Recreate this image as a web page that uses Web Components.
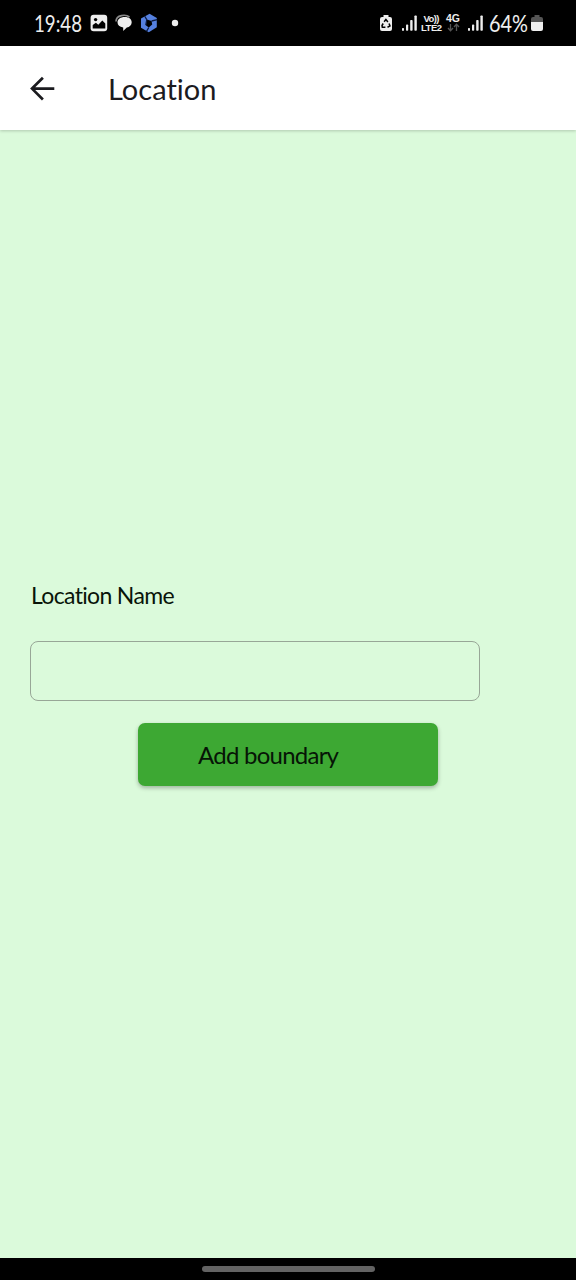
<!DOCTYPE html>
<html lang="en">
<head>
<meta charset="utf-8">
<title>Location</title>
<style>
html,body{margin:0;height:100%}
body{font-family:Lato,"Open Sans",sans-serif;background:#000;overflow:hidden}
</style>
</head>
<body>
<location-screen></location-screen>
<script>
const define = (name, html, setup) => customElements.define(name, class extends HTMLElement {
  constructor() {
    super();
    this.attachShadow({mode: 'open'});
    const t = document.createElement('template');
    t.innerHTML = html;
    this.shadowRoot.append(t.content.cloneNode(true));
  }
  connectedCallback() { if (setup) setup.call(this); }
});

// Text fitted to the width attribute: spaced out evenly, or condensed when "squeeze" is set.
define('fit-text', `
<style>:host{display:block;white-space:nowrap;line-height:1.2}span{display:inline-block;transform-origin:0 50%}</style>
<span><slot></slot></span>`, function () {
  const span = this.shadowRoot.querySelector('span');
  const width = +this.getAttribute('width');
  this.style.width = width + 'px';
  this.style.fontSize = this.getAttribute('size') + 'px';
  const natural = span.getBoundingClientRect().width;
  if (this.hasAttribute('squeeze')) span.style.transform = `scaleX(${width / natural})`;
  else span.style.letterSpacing = (width - natural) / Math.max(1, this.textContent.length - 1) + 'px';
});

define('signal-bars', `
<style>:host{display:block;width:15px;height:16px}svg{display:block}</style>
<svg width="15" height="16" fill="#eee"><rect x="0" y="13" width="2" height="2.8" rx=".6"/><rect x="4" y="9.5" width="2.2" height="6.3" rx=".8"/><rect x="8.2" y="5" width="2.4" height="10.8" rx=".8"/><rect x="12.4" y=".5" width="2.4" height="15.3" rx=".8"/></svg>`);

define('status-bar', `
<style>
:host{display:flex;height:46px;box-sizing:border-box;padding:0 33px 0 34px;align-items:center;justify-content:space-between;background:#000;color:#eee}
div{display:flex;align-items:center}
svg{display:block;flex:none}
.net{display:grid;font:bold 9px/9px "Liberation Sans",Arial,sans-serif;justify-items:center}
.net fit-text{line-height:9px}
</style>
<div>
  <fit-text squeeze width="48" size="22.5">19:48</fit-text>
  <svg style="margin-left:8px" width="18" height="18" viewBox="0 0 18 18"><rect x=".6" y=".7" width="16.6" height="16.6" rx="3" fill="#eee"/><circle cx="5.6" cy="5.6" r="1.7" fill="#000"/><path d="M2.7 14.5V11l3.2-2.2 2.4 2 4-4.3 3 3.1v4.9z" fill="#000"/></svg>
  <svg style="margin-left:7px" width="18" height="18" viewBox="0 0 18 18"><path d="M1 7.5C1 .5 11 .3 14.5 3" fill="none" stroke="#8a8a8a" stroke-width="1.6"/><path d="M9.8 2.9c4.4 0 6.9 2.2 6.9 5.3 0 2.9-2.2 4.7-4.9 5.3L8.2 17v-3.6C4.6 13 2.5 11 2.5 8.2c0-3.1 2.8-5.3 7.3-5.3z" fill="#eee"/></svg>
  <svg style="margin-left:7px" width="18" height="20" viewBox="0 0 18 20"><path d="M9.6.8 16.8 5v9.2L8.8 19.3 1 14.8V5.4z" fill="#5580df"/><path d="M6.8 6.6 11.6 8l.6 3.5-3.4 3-3-2.3z" fill="#000"/><path d="M6.8 6.6 4.6 3M11.6 8l5.6-1.4M8.8 14.5 6.5 18.3M5.8 12.2 6.8 6.6" stroke="#0c1c42" stroke-width="1.3"/></svg>
  <svg style="margin-left:13px" width="8" height="8"><circle cx="4" cy="4" r="3.2" fill="#eee"/></svg>
</div>
<div>
  <svg width="12" height="18" viewBox="0 0 12 18"><path d="M3.5 1h5v2H10q2 0 2 2v10q0 2-2 2H2q-2 0-2-2V5q0-2 2-2h1.5z" fill="#eee"/><path d="m4.1 7.7 1.8-2.2 2 2.4M9 9.5l1 2.5-2.5 1.2M5.4 13.2H2.3L2 11.5l1.2-2" fill="none" stroke="#000" stroke-width="1.5"/></svg>
  <signal-bars style="margin-left:10px"></signal-bars>
  <div class="net" style="margin-left:4px"><fit-text width="16" size="9.5">Vo))</fit-text><fit-text width="21" size="9.5">LTE2</fit-text></div>
  <div class="net" style="margin-left:4px"><fit-text width="14" size="10.5">4G</fit-text><svg width="13" height="9" viewBox="0 0 13 9" fill="none" stroke="#555" stroke-width="1.3"><path d="M3.5 1v6.5M1 5l2.5 2.7L6 5M9.5 8V1.3M7 4l2.5-2.7L12 4"/></svg></div>
  <signal-bars style="margin-left:8px"></signal-bars>
  <fit-text squeeze style="margin-left:6px" width="39" size="22.5">64%</fit-text>
  <svg style="margin-left:3px" width="12" height="18" viewBox="0 0 12 18"><path d="M3.5 1h5v2H10q2 0 2 2v3H0V5q0-2 2-2h1.5z" fill="#555"/><path d="M0 8h12v7q0 2-2 2H2q-2 0-2-2z" fill="#eee"/></svg>
</div>`);

define('app-bar', `
<style>
:host{display:flex;height:84px;box-sizing:border-box;padding:2px 30px 0;align-items:center;background:#fff;color:#1b1b1f;box-shadow:0 1px 3px rgba(0,0,0,.2);z-index:1}
svg{display:block;margin-right:53px}
</style>
<svg width="25" height="26" viewBox="0 0 25 26" fill="none" stroke="#1b1b1f" stroke-width="2.7"><path d="M24.3 12.6H2.5M12.9 1.7 2 12.6l10.9 10.9"/></svg>
<slot></slot>`);

define('text-field', `
<style>
:host{display:block}
::slotted(*){margin-left:1px}
.box{height:60px;width:450px;box-sizing:border-box;border:1px solid #98a697;border-radius:8px;margin-top:31px}
</style>
<slot></slot><div class="box"></div>`);

define('primary-button', `
<style>
:host{display:flex;align-items:center;width:300px;height:63px;box-sizing:border-box;padding-left:60px;padding-top:2px;border-radius:7px;background:#3da833;color:#061506;box-shadow:0 2px 4px rgba(0,0,0,.28)}
</style>
<slot></slot>`);

define('nav-handle', `
<style>
:host{display:flex;height:22px;justify-content:center;align-items:center;background:#000}
div{width:173px;height:6px;border-radius:3px;background:#636363}
</style><div></div>`);

define('location-screen', `
<style>
:host{display:flex;flex-direction:column;width:576px;height:1280px}
main{flex:1;background:#dbfadb;padding:452px 30px 0;color:#091409}
primary-button{margin:22px 0 0 108px}
</style>
<status-bar></status-bar>
<app-bar><fit-text width="109" size="29">Location</fit-text></app-bar>
<main>
  <text-field><fit-text width="144" size="23">Location Name</fit-text></text-field>
  <primary-button><fit-text width="141" size="24">Add boundary</fit-text></primary-button>
</main>
<nav-handle></nav-handle>`);
</script>
</body>
</html>
